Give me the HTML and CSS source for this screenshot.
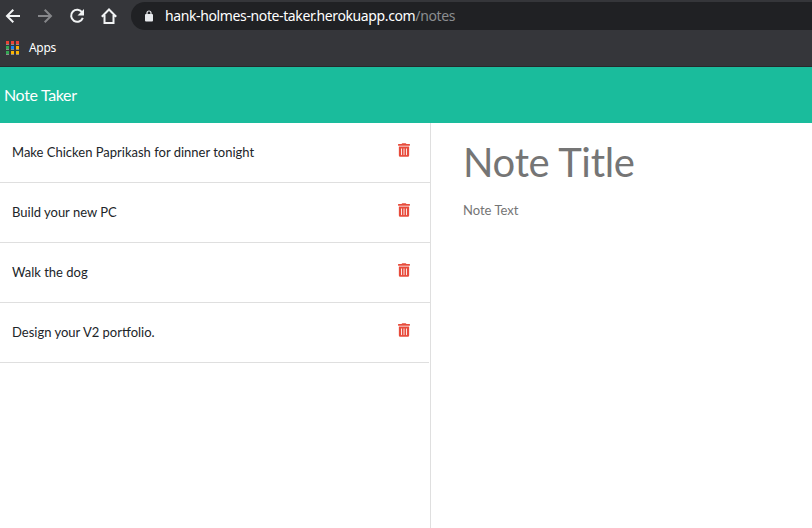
FILE: index.html
```html
<!DOCTYPE html>
<html lang="en">
<head>
<meta charset="utf-8">
<title>Note Taker</title>
<link rel="stylesheet" href="styles.css">
</head>
<body>
<svg class="defs" width="0" height="0">
  <symbol id="trash" viewBox="0 0 448 512"><path d="M32 464a48 48 0 0 0 48 48h288a48 48 0 0 0 48-48V128H32zm272-256a16 16 0 0 1 32 0v224a16 16 0 0 1-32 0zm-96 0a16 16 0 0 1 32 0v224a16 16 0 0 1-32 0zm-96 0a16 16 0 0 1 32 0v224a16 16 0 0 1-32 0zM432 32H312l-9.4-18.7A24 24 0 0 0 281.1 0H166.8a23.72 23.72 0 0 0-21.4 13.3L136 32H16A16 16 0 0 0 0 48v32a16 16 0 0 0 16 16h416a16 16 0 0 0 16-16V48a16 16 0 0 0-16-16z"/></symbol>
</svg>
<header class="browser">
  <div class="toolbar">
    <nav class="controls">
      <svg viewBox="0 0 16 16"><path d="M15 8H2M8.3 1.7 2 8l6.3 6.3"/></svg>
      <svg class="muted" viewBox="0 0 16 16"><path d="M1 8h13M7.700 1.700 14 8l-6.300 6.300"/></svg>
      <svg viewBox="0 0 16 16"><path d="M13.200 4.500A6 6 0 1 0 13.800 9.800"/><path class="solid" d="M15 1v6.500H8.500z"/></svg>
      <svg viewBox="0 0 16 16"><path d="M.8 8.700 8 1.500l7.200 7.200M3.500 7v8h9V7"/></svg>
    </nav>
    <div class="address">
      <svg class="lock" viewBox="0 0 8 12"><path class="shackle" d="M2 5V3a2 2 0 0 1 4 0v2"/><rect y="4" width="8" height="7.500" rx="1"/></svg>
      <span class="url">hank-holmes-note-taker.herokuapp.com<span class="path">/notes</span></span>
    </div>
  </div>
  <div class="bookmarks">
    <div class="grid"><i class="r"></i><i class="r"></i><i class="r"></i><i class="g"></i><i class="b"></i><i class="y"></i><i class="g"></i><i class="y"></i><i class="y"></i></div>
    <span class="apps">Apps</span>
  </div>
</header>
<div class="navbar">Note Taker</div>
<main class="content">
  <ul class="list">
    <li><span>Make Chicken Paprikash for dinner tonight</span><svg class="trash"><use href="#trash"/></svg></li>
    <li><span>Build your new PC</span><svg class="trash"><use href="#trash"/></svg></li>
    <li><span>Walk the dog</span><svg class="trash"><use href="#trash"/></svg></li>
    <li><span>Design your V2 portfolio.</span><svg class="trash"><use href="#trash"/></svg></li>
  </ul>
  <section class="editor">
    <div class="title">Note Title</div>
    <div class="text">Note Text</div>
  </section>
</main>
</body>
</html>
```
FILE: styles.css
```css
* { box-sizing: border-box; }
body { margin: 0; height: 528px; overflow: hidden; display: flex; flex-direction: column; background: #fff; color: #212529; font: 13px/20px Lato, sans-serif; }
.defs { display: none; }
.browser { height: 67px; flex: none; background: #35363a; border-bottom: 1px solid #28292c; color: #fff; font-family: "Noto Sans", sans-serif; }
.toolbar { display: flex; height: 30px; padding-top: 2px; }
.controls { display: flex; gap: 16px; width: 131px; flex: none; padding: 6px 0 0 5px; }
.controls svg { width: 16px; height: 16px; fill: none; stroke: #f1f3f4; stroke-width: 2; }
.controls .muted { stroke: #86878a; }
.controls .solid { fill: #f1f3f4; stroke: none; }
.address { flex: 1; height: 28px; display: flex; align-items: center; padding-left: 14px; background: #202124; border-radius: 14px 0 0 14px; }
.lock { width: 8px; height: 12px; margin-right: 12px; fill: #e8eaed; }
.shackle { fill: none; stroke: #e8eaed; stroke-width: 1.2; }
.url { font-size: 14px; white-space: nowrap; letter-spacing: -0.38px; }
.path { color: #8b8d90; }
.bookmarks { display: flex; align-items: center; height: 36px; padding-left: 6px; }
.grid { display: grid; grid-template-columns: repeat(3, 3px); gap: 1px 2px; width: 13px; margin-right: 10px; }
.grid i { height: 4px; border-bottom: 1px solid #8d8d8d; }
.r { background: #ea4335; }
.g { background: #34a853; }
.b { background: #1a85f2; }
.y { background: #fbb505; }
.apps { font-size: 12px; letter-spacing: -0.3px; }
.navbar { height: 56px; flex: none; padding-left: 4px; background: #1abc9c; color: #fff; font-size: 16px; line-height: 55px; letter-spacing: -0.35px; }
.content { display: flex; flex: 1; }
.list { width: 431px; margin: 0; padding: 0; list-style: none; border-right: 1px solid #dfdfdf; }
.list li { display: flex; justify-content: space-between; height: 60px; padding: 19px 20px 0 12px; border-bottom: 1px solid #dfdfdf; }
.list li:last-child { margin-right: 1px; padding-right: 19px; }
.trash { width: 12px; height: 14px; margin-top: 1px; fill: #e74c3c; }
.editor { padding: 15px 0 0 32px; color: #757575; }
.title { font-size: 40px; line-height: 48px; letter-spacing: -0.3px; }
.text { margin-top: 14px; }
```
